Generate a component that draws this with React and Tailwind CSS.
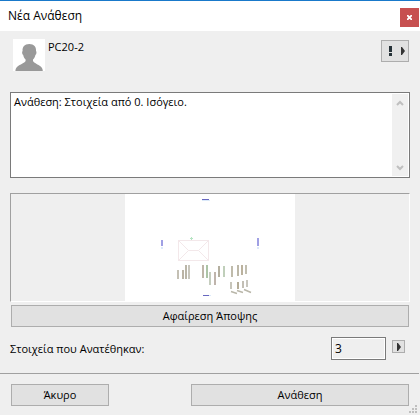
import { useState } from 'react';

const bars = [
  { x: 52, y: 76, h: 9, color: '#c4c0b4' },
  { x: 57, y: 76, h: 9, color: '#bbb4a5' },
  { x: 60, y: 71, h: 14, color: '#bab6a8' },
  { x: 63, y: 71, h: 14, color: '#c8c6bc' },
  { x: 77, y: 71, h: 13, color: '#beb6a9' },
  { x: 81, y: 71, h: 13, color: '#acc4a6' },
  { x: 84, y: 78, h: 13, color: '#c5cdbe' },
  { x: 89, y: 78, h: 13, color: '#bfb4ac' },
  { x: 93, y: 72, h: 11, color: '#b4af9f' },
  { x: 98, y: 72, h: 11, color: '#c0cfba' },
  { x: 106, y: 72, h: 11, color: '#bfbbab' },
  { x: 112, y: 71, h: 11, color: '#bdb8a8' },
  { x: 116, y: 71, h: 10, color: '#bbb29e' },
  { x: 120, y: 71, h: 9, color: '#c1beb0' },
  { x: 105, y: 88, h: 7, color: '#c7c5bb' },
  { x: 112, y: 88, h: 7, color: '#b4ac98' },
  { x: 117, y: 87, h: 7, color: '#c3bfb5' },
  { x: 121, y: 86, h: 7, color: '#c8c6be' },
];

const Person = () => (
  <svg className="w-8 h-8 shrink-0 bg-white" viewBox="0 0 32 32" fill="#999">
    <path d="M16.300 5C11.500 5 9.200 8 9.600 12 8.800 12.500 9 15.500 10.200 16 10.600 18 11.600 19.500 12.600 20.500V22C11.500 24 7 25.500 4.500 27.500 3 28.700 2.600 30 2.400 32H29.800C29.600 30 29.200 28.700 27.700 27.500 25.200 25.500 21 24 20 22V20.500C21 19.500 22 18 22.400 16 23.600 15.500 23.800 12.500 23 12 23.400 8 21.100 5 16.300 5Z" />
  </svg>
);

const ArrowRight = () => (
  <svg className="w-1 h-2" viewBox="0 0 4 8" fill="#333">
    <path d="M0 0h1l3 4-3 4H0z" />
  </svg>
);

const Chevron = ({ d }) => (
  <svg
    className="w-2 h-2"
    viewBox="0 0 8 8"
    fill="none"
    stroke="#bfbfbf"
    strokeWidth="2"
  >
    <path d={d} />
  </svg>
);

const Preview = () => (
  <svg className="w-[170px] h-[107px] bg-white" viewBox="0 0 170 107">
    <g fill="none" stroke="#f3e8ea">
      <rect x="53.5" y="46.5" width="30" height="20" />
      <path d="M53.500 46.500 63.500 56.500H73.500L83.500 46.500M53.500 66.500 63.500 56.500M73.500 56.500 83.500 66.500" />
    </g>
    <path d="M65 44.500h3M66.500 43v3" stroke="#b5e4c2" />
    <g fill="#6868c0">
      <rect x="77" y="5" width="7" height="1" />
      <rect x="78" y="101" width="6" height="1" />
    </g>
    <g fill="#a0a0e4">
      <rect x="36" y="46" width="2" height="6" />
      <rect x="132" y="44" width="2" height="8" />
    </g>
    <g fill="#dceafa">
      <rect x="77" y="6" width="8" height="1" />
      <rect x="84" y="101" width="2" height="1" />
      <rect x="36" y="53" width="2" height="2" />
      <rect x="132" y="53" width="2" height="2" />
    </g>
    {bars.map((bar) => (
      <rect
        key={`${bar.x}-${bar.y}`}
        x={bar.x}
        y={bar.y}
        width="2"
        height={bar.h}
        fill={bar.color}
      />
    ))}
    <path
      d="M106 97.500 112 99.500M112 96.500 118 98.500M119 95.500 126 98.500"
      stroke="#b9b6a9"
      strokeWidth="1.500"
    />
  </svg>
);

const Grip = () => (
  <svg
    className="absolute right-[3px] bottom-[2px] w-2 h-2"
    viewBox="0 0 8 8"
    fill="#bfbfbf"
  >
    <path d="M6 0h2v2H6zM3 3h2v2H3zM6 3h2v2H6zM0 6h2v2H0zM3 6h2v2H3zM6 6h2v2H6z" />
  </svg>
);

const App = () => {
  const [message, setMessage] = useState('Ανάθεση: Στοιχεία από 0. Ισόγειο.');
  const [count, setCount] = useState('3');

  return (
    <div className="relative bg-[#efefef] text-black text-[11px] leading-4 font-['Open_Sans','Noto_Sans',sans-serif]">
      <header className="flex justify-between items-center h-[31px] border-t border-[#1979ca] bg-white pl-2 pr-px">
        <h1 className="text-[12px]">Νέα Ανάθεση</h1>
        <button
          aria-label="Κλείσιμο"
          className="flex justify-center items-center w-[19px] h-[19px] mt-[3px] bg-[#c75050]"
        >
          <svg
            className="w-[5px] h-[5px]"
            viewBox="0 0 5 5"
            stroke="white"
            strokeWidth="1.800"
          >
            <path d="M0 0 5 5M5 0 0 5" />
          </svg>
        </button>
      </header>

      <main className="px-[10px] pt-2 pb-[13px]">
        <div className="flex items-start pl-[3px] pr-px">
          <Person />
          <span className="ml-[3px]">PC20-2</span>
          <button
            aria-label="Προτεραιότητα"
            className="flex justify-end items-center gap-[9px] w-7 h-[22px] mt-px ml-auto pr-[3px] border border-[#adadad] bg-[#e1e1e1]"
          >
            <svg className="w-[3px] h-[10px]" viewBox="0 0 3 10" fill="#263238">
              <path d="M0 0h3v6H0zM0 7h3v3H0z" />
            </svg>
            <ArrowRight />
          </button>
        </div>

        <div className="flex h-[86px] mt-[21px] p-px border border-[#7a7a7a] bg-white">
          <textarea
            aria-label="Μήνυμα"
            className="flex-1 min-w-0 pl-[2px] resize-none outline-none overflow-hidden"
            value={message}
            onChange={(e) => setMessage(e.target.value)}
          />
          <div className="flex flex-col justify-between w-4 bg-[#f0f0f0]">
            <button
              aria-label="Πάνω"
              className="flex justify-center items-center h-[17px]"
            >
              <Chevron d="M1 6 4 3 7 6" />
            </button>
            <button
              aria-label="Κάτω"
              className="flex justify-center items-center h-[17px]"
            >
              <Chevron d="M1 2 4 5 7 2" />
            </button>
          </div>
        </div>

        <div className="flex justify-center mt-[15px] border border-t-[#a0a0a0] border-l-[#a0a0a0] border-r-white border-b-white">
          <Preview />
        </div>

        <div className="px-px mt-[3px]">
          <button className="w-full h-[22px] border border-[#adadad] bg-[#e1e1e1]">
            Αφαίρεση Άποψης
          </button>
        </div>

        <div className="flex items-center mt-[10px] pr-[5px]">
          <label htmlFor="count">Στοιχεία που Ανατέθηκαν:</label>
          <input
            id="count"
            type="text"
            className="w-[55px] h-[23px] ml-auto px-[3px] border border-[#7a7a7a] bg-[#efefef] ring-1 ring-inset ring-white text-[12px] outline-none"
            value={count}
            onChange={(e) => setCount(e.target.value)}
          />
          <button
            aria-label="Επιλογή στοιχείων"
            className="flex justify-center items-center w-[13px] h-[13px] ml-[6px] mb-1 border border-[#adadad] bg-[#e1e1e1]"
          >
            <ArrowRight />
          </button>
        </div>
      </main>

      <footer className="flex justify-between mr-px pt-[10px] pb-[9px] pl-[11px] pr-[10px] border-t border-[#a0a0a0]">
        <button className="w-[98px] h-[22px] border border-[#adadad] bg-[#e1e1e1]">
          Άκυρο
        </button>
        <button className="w-[218px] h-[22px] border border-[#adadad] bg-[#e1e1e1]">
          Ανάθεση
        </button>
      </footer>
      <Grip />
    </div>
  );
};

export default App;
